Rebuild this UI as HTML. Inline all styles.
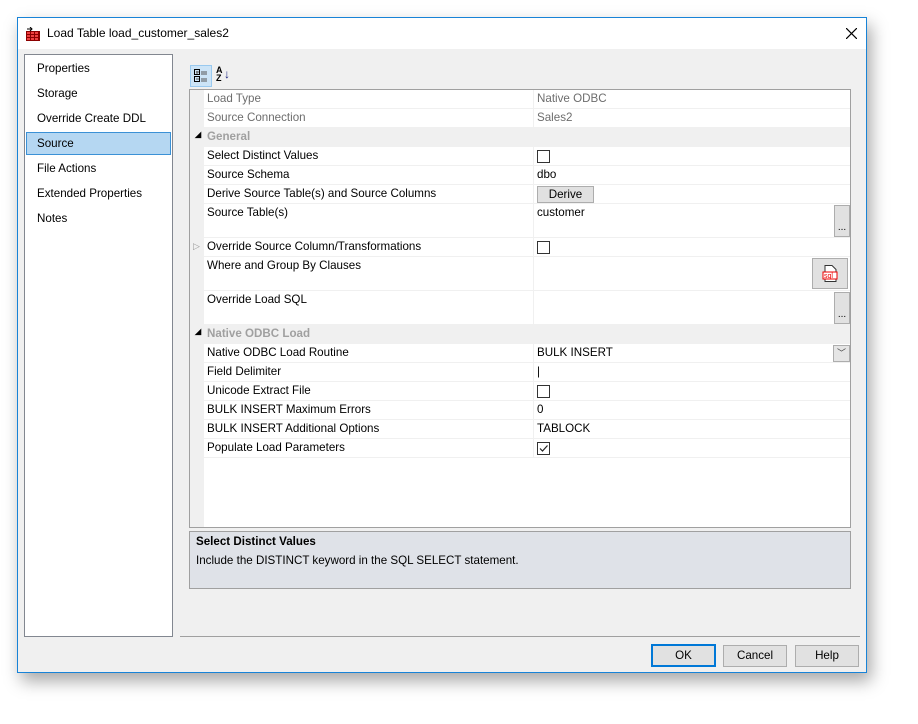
<!DOCTYPE html>
<html><head><style>
body{margin:0;width:918px;height:724px;background:#fff;font-family:"Liberation Sans",sans-serif;font-size:11.6px;color:#000;position:relative;overflow:hidden}
.win{position:absolute;left:17px;top:17px;width:848px;height:654px;border:1px solid #1883d7;background:#f0f0f0;box-shadow:4px 8px 16px rgba(0,0,0,.35)}
.title{position:absolute;left:0;top:0;width:848px;height:31px;background:#fff}
.abs{position:absolute}
.lp{left:6px;top:36px;width:147px;height:581px;background:#fff;border:1px solid #828790}
.lp div{position:absolute;left:12px}
.grid{left:171px;top:71px;width:660px;height:437px;background:#fff;border:1px solid #a0a0a0}
.row{position:absolute;left:14px;width:646px;border-bottom:1px solid #f0f0f0}
.row .n{position:absolute;left:3px;top:2px}
.row .v{position:absolute;left:333px;top:2px}
.row .sep{position:absolute;left:329px;top:0;bottom:0;width:1px;background:#f0f0f0}
.cat{position:absolute;left:0;width:660px;height:19px;background:#f0f0f0;color:#a0a0a0;font-weight:bold}
.gray{color:#6d6d6d}
.cb{position:absolute;left:333px;top:3px;width:11px;height:11px;border:1px solid #333;background:#fff}
.btn{position:absolute;background:#e1e1e1;border:1px solid #adadad;text-align:center;line-height:19px}
.dots{position:absolute;left:630px;width:14px;background:#e1e1e1;border:1px solid #adadad;font-size:10px;text-align:center}
</style></head><body>
<div class="win">
 <div class="title">
  <svg class="abs" style="left:8px;top:9px" width="14" height="14"><rect x="0" y="4" width="14" height="10" fill="#8b0000"/><g fill="#f04040"><rect x="1" y="5" width="3" height="2"/><rect x="5" y="5" width="3" height="2"/><rect x="9" y="5" width="3" height="2"/><rect x="1" y="8" width="3" height="2"/><rect x="5" y="8" width="3" height="2"/><rect x="9" y="8" width="3" height="2"/><rect x="1" y="11" width="3" height="2"/><rect x="5" y="11" width="3" height="2"/><rect x="9" y="11" width="3" height="2"/></g><path d="M1 2h5M4 0l2 2-2 2" stroke="#000" fill="none"/></svg>
  <div class="abs" style="left:29px;top:8px;font-size:12px">Load Table load_customer_sales2</div>
  <svg class="abs" style="left:828px;top:10px" width="11" height="11"><path d="M0 0L11 11M11 0L0 11" stroke="#000" stroke-width="1.2"/></svg>
 </div>
 <div class="abs lp">
  <div style="top:7px">Properties</div>
  <div style="top:32px">Storage</div>
  <div style="top:57px">Override Create DDL</div>
  <div style="left:1px;top:77px;width:143px;height:21px;background:#b5d7f2;border:1px solid #3b91d6"></div>
  <div style="top:82px">Source</div>
  <div style="top:107px">File Actions</div>
  <div style="top:132px">Extended Properties</div>
  <div style="top:157px">Notes</div>
 </div>
 <div class="abs" style="left:172px;top:47px;width:20px;height:20px;background:#cce4f7;border:1px solid #99c9ef"></div>
 <svg class="abs" style="left:176px;top:51px" width="14" height="14"><g fill="none" stroke="#000"><rect x=".5" y=".5" width="5" height="5"/><rect x=".5" y="7.5" width="5" height="5"/></g><path d="M2 3h3M3 2v3M2 10h3M7 3h6M7 5h6M7 10h6M7 12h6" stroke="#555"/></svg>
 <div class="abs" style="left:198px;top:48px;font-size:9px;line-height:8px;font-weight:bold">A<br>Z</div><div class="abs" style="left:206px;top:49px;color:#1a237e;font-size:12px">↓</div>
 <div class="abs grid">
  <div class="abs" style="left:0;top:0;width:14px;height:437px;background:#f0f0f0"></div>
  <div class="row" style="top:0;height:18px"><span class="n gray">Load Type</span><div class="sep"></div><span class="v gray">Native ODBC</span></div>
  <div class="row" style="top:19px;height:18px"><span class="n gray">Source Connection</span><div class="sep"></div><span class="v gray">Sales2</span></div>
  <div class="cat" style="top:38px"><span class="abs" style="left:5px;top:2px;color:#000;font-size:8px">◢</span><span class="abs" style="left:17px;top:2px">General</span></div>
  <div class="row" style="top:57px;height:18px"><span class="n">Select Distinct Values</span><div class="sep"></div><div class="cb"></div></div>
  <div class="row" style="top:76px;height:18px"><span class="n">Source Schema</span><div class="sep"></div><span class="v">dbo</span></div>
  <div class="row" style="top:95px;height:18px"><span class="n">Derive Source Table(s) and Source Columns</span><div class="sep"></div><div class="btn" style="left:333px;top:1px;width:55px;height:15px;line-height:15px">Derive</div></div>
  <div class="row" style="top:114px;height:33px"><span class="n">Source Table(s)</span><div class="sep"></div><span class="v">customer</span><div class="dots" style="top:1px;height:30px;line-height:44px">...</div></div>
  <div class="row" style="top:148px;height:18px"><span class="abs" style="left:-11px;top:3px;color:#999;font-size:9px">▷</span><span class="n">Override Source Column/Transformations</span><div class="sep"></div><div class="cb"></div></div>
  <div class="row" style="top:167px;height:33px"><span class="n">Where and Group By Clauses</span><div class="sep"></div><div class="btn" style="left:608px;top:1px;width:34px;height:29px"><svg style="margin-top:6px" width="16" height="17"><path d="M3 .5h7l4 4v12H3z" fill="#fff" stroke="#333"/><rect x="1" y="7" width="14" height="7" fill="#fff" stroke="#e00"/><text x="2" y="13" font-size="7" fill="#e00" font-family="Liberation Sans">sql</text></svg></div></div>
  <div class="row" style="top:201px;height:33px"><span class="n">Override Load SQL</span><div class="sep"></div><div class="dots" style="top:1px;height:30px;line-height:44px">...</div></div>
  <div class="cat" style="top:235px"><span class="abs" style="left:5px;top:2px;color:#000;font-size:8px">◢</span><span class="abs" style="left:17px;top:2px">Native ODBC Load</span></div>
  <div class="row" style="top:254px;height:18px"><span class="n">Native ODBC Load Routine</span><div class="sep"></div><span class="v">BULK INSERT</span><div class="abs" style="left:629px;top:1px;width:15px;height:15px;background:#e5e5e5;border:1px solid #adadad;text-align:center;font-size:9px;line-height:15px;color:#444">﹀</div></div>
  <div class="row" style="top:273px;height:18px"><span class="n">Field Delimiter</span><div class="sep"></div><span class="v">|</span></div>
  <div class="row" style="top:292px;height:18px"><span class="n">Unicode Extract File</span><div class="sep"></div><div class="cb"></div></div>
  <div class="row" style="top:311px;height:18px"><span class="n">BULK INSERT Maximum Errors</span><div class="sep"></div><span class="v">0</span></div>
  <div class="row" style="top:330px;height:18px"><span class="n">BULK INSERT Additional Options</span><div class="sep"></div><span class="v">TABLOCK</span></div>
  <div class="row" style="top:349px;height:18px"><span class="n">Populate Load Parameters</span><div class="sep"></div><div class="cb"><svg class="abs" style="left:1px;top:1px" width="9" height="9"><path d="M1 4.5l2.5 2.5 5-5.5" stroke="#222" fill="none" stroke-width="1.2"/></svg></div></div>
 </div>
 <div class="abs" style="left:171px;top:513px;width:660px;height:56px;background:#dfe2e8;border:1px solid #a0a0a0">
  <div class="abs" style="left:6px;top:3px;font-weight:bold">Select Distinct Values</div>
  <div class="abs" style="left:6px;top:22px">Include the DISTINCT keyword in the SQL SELECT statement.</div>
 </div>
 <div class="abs" style="left:162px;top:618px;width:680px;height:1px;background:#a0a0a0"></div>
 <div class="btn" style="left:633px;top:626px;width:61px;height:19px;border:2px solid #0078d7;line-height:19px">OK</div>
 <div class="btn" style="left:705px;top:627px;width:62px;height:20px">Cancel</div>
 <div class="btn" style="left:777px;top:627px;width:62px;height:20px">Help</div>
</div>
</body></html>
